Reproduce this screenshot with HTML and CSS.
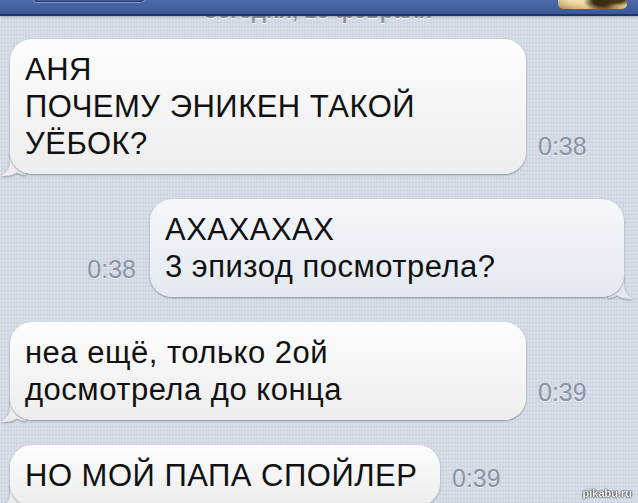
FILE: index.html
```html
<!DOCTYPE html>
<html>
<head>
    <title>Сообщения</title>
    <link rel="stylesheet" href="styles.css">
</head>
<body>
    <!-- top bar, only its lower edge is on screen -->
    <div class="topbar">
        <div class="back-btn"></div>
        <div class="avatar"></div>
    </div>

    <div class="chat">
        <div class="day">Сегодня, 16 февраля</div>

        <div class="row in">
            <div class="bubble wide">
                АНЯ<br>ПОЧЕМУ ЭНИКЕН ТАКОЙ<br>УЁБОК?
                <svg class="tail" width="26" height="24" viewBox="0 0 26 24"><path d="M10 0 L10 8 Q10 18 1 23 Q11 23.5 17 19.5 Q21 22 26 22 L26 0 Z"/></svg>
            </div>
            <span class="time">0:38</span>
        </div>

        <div class="row out">
            <span class="time">0:38</span>
            <div class="bubble">
                АХАХАХАХ<br>3 эпизод посмотрела?
                <svg class="tail" width="26" height="24" viewBox="0 0 26 24"><path d="M16 0 L16 8 Q16 18 25 23 Q15 23.5 9 19.5 Q5 22 0 22 L0 0 Z"/></svg>
            </div>
        </div>

        <div class="row in">
            <div class="bubble wide">
                неа ещё, только 2ой<br>досмотрела до конца
                <svg class="tail" width="26" height="24" viewBox="0 0 26 24"><path d="M10 0 L10 8 Q10 18 1 23 Q11 23.5 17 19.5 Q21 22 26 22 L26 0 Z"/></svg>
            </div>
            <span class="time">0:39</span>
        </div>

        <div class="row in">
            <div class="bubble short">
                НО МОЙ ПАПА СПОЙЛЕР
                <svg class="tail" width="26" height="24" viewBox="0 0 26 24"><path d="M10 0 L10 8 Q10 18 1 23 Q11 23.5 17 19.5 Q21 22 26 22 L26 0 Z"/></svg>
            </div>
            <span class="time">0:39</span>
        </div>
    </div>

    <div class="watermark">pikabu.ru</div>
</body>
</html>
```

FILE: styles.css
```css
/* Page */
html, body {
    height: 100%;
}

body {
    margin: 0;
    overflow: hidden;
    font-family: 'Liberation Sans', Arial, sans-serif;
    color: #111;
    background-color: #d3dae5;
    background-image:
        repeating-linear-gradient(90deg, rgba(255,255,255,0.16) 0 1px, transparent 1px 3px),
        repeating-linear-gradient(0deg, rgba(60,80,110,0.05) 0 1px, transparent 1px 4px);
}

/* Top bar */
.topbar {
    position: fixed;
    top: 0;
    left: 0;
    right: 0;
    height: 14px;
    z-index: 2;
    display: flex;
    justify-content: space-between;
    align-items: flex-end;
    padding: 0 11px 0 32px;
    background: linear-gradient(#4c6aa8, #3a5897);
    border-bottom: 2px solid #1f3366;
    box-shadow: 0 1px 2px rgba(0,0,0,0.25);
    overflow: hidden;
}

.back-btn {
    width: 112px;
    height: 30px;
    margin-bottom: 12px;
    border: 1px solid #243c74;
    border-radius: 6px;
    box-shadow: 0 1px 0 rgba(255,255,255,0.3);
    background: linear-gradient(#506fae, #3d5b99);
}

.avatar {
    flex: none;
    width: 69px;
    height: 30px;
    margin-bottom: 5px;
    border-radius: 5px;
    background:
        radial-gradient(ellipse at 62% 75%, #3a2a12 0 12%, transparent 28%),
        radial-gradient(ellipse at 85% 70%, #4a3515 0 8%, transparent 20%),
        radial-gradient(ellipse at 30% 60%, #f1dcaa 0 20%, transparent 50%),
        linear-gradient(90deg, #b39256, #d9bd80 40%, #8a6a35 70%, #e3cf9e);
}

/* Conversation */
.chat {
    display: flex;
    flex-direction: column;
    gap: 25px;
    padding: 0 14px 0 10px;
}

.day {
    margin-top: -2px;
    margin-bottom: -10px;
    text-align: center;
    font-size: 22px;
    line-height: 26px;
    font-weight: bold;
    color: #8d95a3;
    text-shadow: 0 1px 0 #fff;
}

.row {
    display: flex;
    align-items: flex-end;
    gap: 12px;
}

.row.out {
    justify-content: flex-end;
    gap: 14px;
}

.bubble {
    position: relative;
    box-sizing: border-box;
    padding: 12px 15px;
    font-size: 31px;
    line-height: 37px;
    letter-spacing: 0.5px;
    border-radius: 22px;
    background: linear-gradient(#fdfdfd, #ededed);
    box-shadow: 0 1px 2px rgba(40,50,70,0.45);
}

.bubble.wide {
    width: 516px;
}

.bubble.short {
    width: 430px;
}

.row.out .bubble {
    width: 474px;
    background: linear-gradient(#f5f7fb, #e3e8f0);
}

.tail {
    position: absolute;
    bottom: -3px;
    left: -10px;
    fill: #ededed;
    filter: drop-shadow(0 1px 1px rgba(40,50,70,0.4));
    z-index: -1;
}

.row.out .tail {
    left: auto;
    right: -10px;
    fill: #e3e8f0;
}

.time {
    margin-bottom: 13px;
    font-size: 25px;
    line-height: 30px;
    color: #8b95a7;
    text-shadow: 0 1px 0 rgba(255,255,255,0.5);
}

/* Site mark */
.watermark {
    position: fixed;
    right: 6px;
    bottom: 4px;
    font-size: 11px;
    font-weight: bold;
    color: #fff;
    text-shadow: 0 0 2px #000, 0 0 1px #000;
}
```
